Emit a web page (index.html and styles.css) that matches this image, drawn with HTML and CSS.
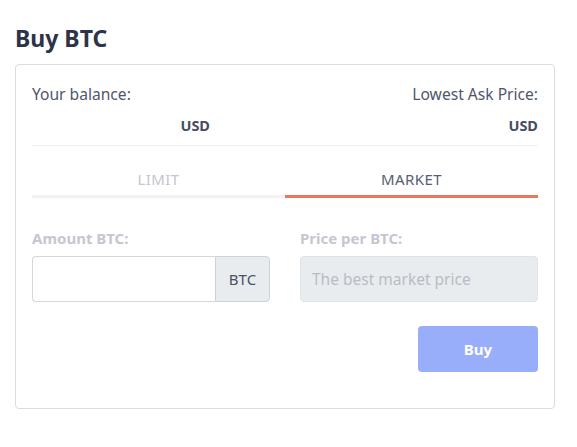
FILE: index.html
```html
<!DOCTYPE html>
<html>
<head>
<meta charset="utf-8">
<link rel="stylesheet" href="styles.css">
</head>
<body>
<div class="page">
  <h1 class="title">Buy BTC</h1>
  <div class="card">
    <div class="balance">
      <div class="bal-col bal-left">
        <div class="bal-label">Your balance:</div>
        <div class="bal-value bal-value-left">USD</div>
      </div>
      <div class="bal-col bal-right">
        <div class="bal-label">Lowest Ask Price:</div>
        <div class="bal-value">USD</div>
      </div>
    </div>
    <div class="sep"></div>
    <div class="tabs">
      <div class="tab">LIMIT</div>
      <div class="tab tab-active">MARKET</div>
    </div>
    <div class="form">
      <div class="field">
        <div class="field-label">Amount BTC:</div>
        <div class="group">
          <div class="group-input"></div>
          <div class="addon">BTC</div>
        </div>
      </div>
      <div class="field">
        <div class="field-label">Price per BTC:</div>
        <div class="disabled-input">The best market price</div>
      </div>
    </div>
    <div class="actions">
      <button class="buy">Buy</button>
    </div>
  </div>
</div>
</body>
</html>
```
FILE: styles.css
```css
* { box-sizing: border-box; }
body {
  margin: 0;
  background: #fff;
  font-family: "Noto Sans", "Open Sans", sans-serif;
  color: #4f566b;
}
.page {
  padding: 22px 22px 0 15px;
}
.title {
  margin: 0;
  font-size: 23px;
  line-height: 32px;
  font-weight: 700;
  color: #2d3349;
  height: 42px;
}
.card {
  border: 1px solid #dcdcdc;
  border-radius: 4px;
  padding: 18px 16px 36px 16px;
}
.balance {
  display: flex;
  justify-content: space-between;
}
.bal-label {
  font-size: 15.6px;
  line-height: 22px;
  color: #4f566b;
}
.bal-value {
  margin-top: 9px;
  font-size: 14.5px;
  line-height: 22px;
  font-weight: 700;
  color: #474d63;
}
.bal-value-left {
  width: 178px;
  text-align: right;
}
.bal-right { text-align: right; }
.sep {
  margin-top: 9px;
  height: 1px;
  background: #f0f0f0;
}
.tabs {
  display: flex;
}
.tab {
  flex: 1;
  text-align: center;
  padding-top: 23px;
  padding-bottom: 6px;
  font-size: 15px;
  line-height: 20px;
  color: #c3c6d0;
  border-bottom: 3px solid #f2f2f2;
  letter-spacing: 0.4px;
}
.tab-active {
  color: #585e73;
  border-bottom-color: #e9775b;
}
.form {
  display: flex;
  gap: 30px;
  margin-top: 30px;
}
.field { flex: 1; }
.field-label {
  font-size: 15px;
  line-height: 20px;
  font-weight: 700;
  color: #c5c7cf;
  margin-bottom: 8px;
}
.group {
  display: flex;
  height: 46px;
}
.group-input {
  flex: 1;
  border: 1px solid #d4d6da;
  border-right: none;
  border-radius: 4px 0 0 4px;
  background: #fff;
}
.addon {
  width: 55px;
  display: flex;
  align-items: center;
  justify-content: center;
  background: #e9ecef;
  border: 1px solid #cfd3d8;
  border-radius: 0 4px 4px 0;
  font-size: 15px;
  color: #4a5064;
}
.disabled-input {
  height: 46px;
  background: #e9ecef;
  border: 1px solid #dfe2e6;
  border-radius: 4px;
  padding: 0 11px;
  display: flex;
  align-items: center;
  font-size: 15.5px;
  color: #b9bcc5;
}
.actions {
  display: flex;
  justify-content: flex-end;
  margin-top: 24px;
}
.buy {
  width: 120px;
  height: 46px;
  border: none;
  border-radius: 4px;
  background: #99aefa;
  color: #fff;
  font-family: "Noto Sans", "Open Sans", sans-serif;
  font-size: 15px;
  font-weight: 700;
}
```
